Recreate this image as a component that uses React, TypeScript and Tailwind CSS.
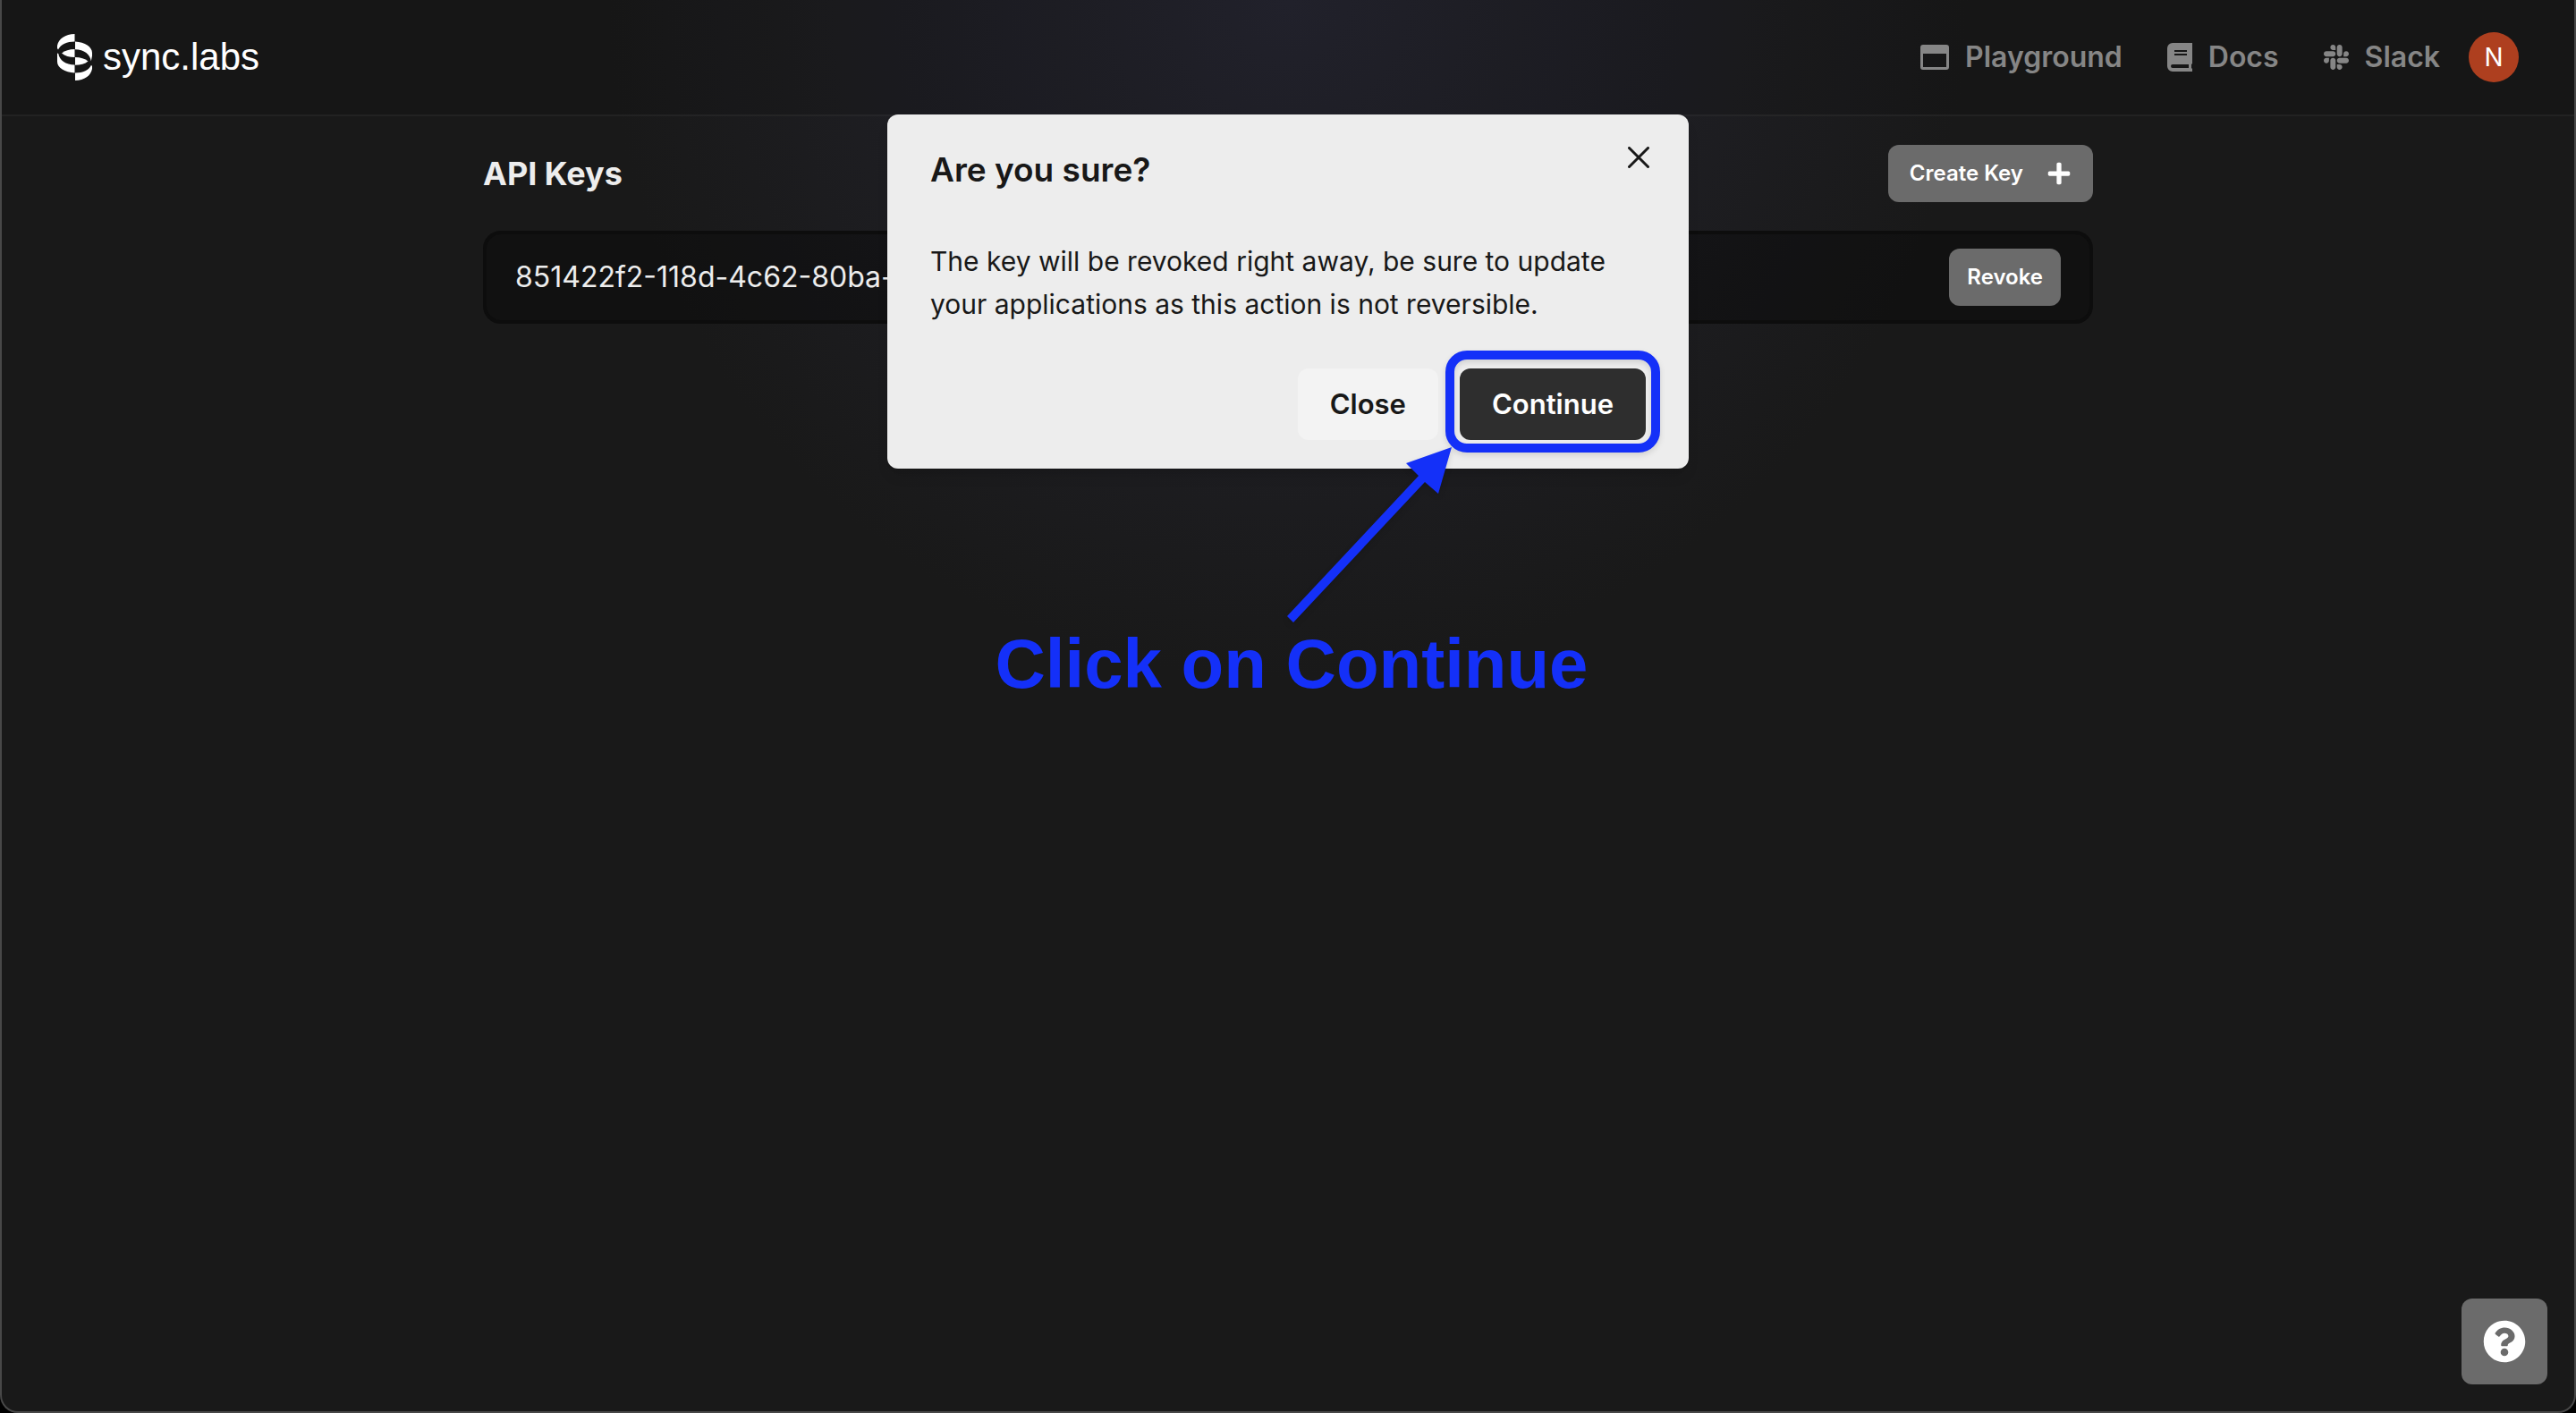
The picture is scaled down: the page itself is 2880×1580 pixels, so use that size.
import { FaPlus, FaQuestionCircle, FaSlack } from "react-icons/fa";

function Logo() {
  return (
    <a href="#" aria-label="sync.labs" className="flex items-center gap-3 text-white">
      <svg viewBox="0 0 39 52" className="h-[52px] w-[39px]" fill="currentColor" aria-hidden="true">
        <path d="M19.500 0V8.500C11 8.500 4 11.500 1 17.500L0 16V13C1.500 5.500 9 0 19.500 0Z" />
        <path d="M20 8.500C31 9 39 14.500 39 21V24.500L37.800 30.500C37 22.500 30 17.500 20 17.200Z" />
        <path d="M5 21.500C8.500 18.500 13.500 17 19.500 17V26C13.500 26 8.500 24.500 5 21.500Z" />
        <path d="M0 21.500L1.300 22C2.500 29.500 9.500 34.300 19.500 34.600V43.500C8.500 43 0 37.500 0 31Z" />
        <path d="M20 26C26 26 31 27.500 34.500 30.500C31 33.500 26 34.800 20 34.800Z" />
        <path d="M20 52V43.500C29 43.500 35.500 40.500 38 34.800L39 36V39C37.500 46.500 30.500 52 20 52Z" />
      </svg>
      <span className="font-['Liberation_Sans',sans-serif] text-[42px] leading-[52px]">sync.labs</span>
    </a>
  );
}

function WindowIcon() {
  return (
    <svg viewBox="0 0 32 28" className="h-7 w-8" fill="currentColor" aria-hidden="true">
      <path fillRule="evenodd" d="M3 0H29A3 3 0 0 1 32 3V25A3 3 0 0 1 29 28H3A3 3 0 0 1 0 25V3A3 3 0 0 1 3 0ZM3 10V25H29V10Z" />
    </svg>
  );
}

function BookIcon() {
  return (
    <svg viewBox="0 0 28 32" className="h-8 w-7" fill="currentColor" aria-hidden="true">
      <path
        fillRule="evenodd"
        d="M6 0H28V23L27 24V28L28 29V32H6A6 6 0 0 1 0 26V6A6 6 0 0 1 6 0ZM8 8V10H22V8ZM8 12V14H22V12ZM6 24A2 2 0 0 0 6 28H24V24Z"
      />
    </svg>
  );
}

function Header() {
  return (
    <header className="flex h-[130px] items-center justify-between border-b-2 border-white/5 bg-black/10 px-[62px]">
      <Logo />
      <div className="flex items-center gap-8">
        <nav className="flex items-center gap-[50px] text-[32px] leading-10 font-semibold text-[#868686]">
          <a href="#" className="flex items-center gap-[18px]"><WindowIcon />Playground</a>
          <a href="#" className="flex items-center gap-[18px]"><BookIcon />Docs</a>
          <a href="#" className="flex items-center gap-[18px]"><FaSlack className="h-8 w-7" />Slack</a>
        </nav>
        <button type="button" className="size-14 rounded-full bg-[#ae3f1f] text-[28px] leading-8 text-white">N</button>
      </div>
    </header>
  );
}

function ConfirmDialog() {
  return (
    <div className="absolute inset-x-0 top-32 mx-auto w-[896px]">
      <section role="dialog" aria-labelledby="confirm-title" className="relative rounded-xl bg-[#ededed] px-12 pt-10 pb-8 text-[#181818] shadow-lg">
        <h2 id="confirm-title" className="text-[37px] leading-[44px] font-semibold">Are you sure?</h2>
        <button type="button" aria-label="Dismiss" className="absolute top-9 right-11 size-6">
          <svg viewBox="0 0 24 24" className="size-6" fill="none" stroke="currentColor" strokeWidth="3" strokeLinecap="round" aria-hidden="true">
            <path d="M1.500 1.500L22.500 22.500M22.500 1.500L1.500 22.500" />
          </svg>
        </button>
        <p className="mt-14 text-[30px] leading-[48px]">
          The key will be revoked right away, be sure to update your applications as this action is not reversible.
        </p>
        <div className="mt-12 flex justify-end gap-6 text-[31px] leading-[48px] font-semibold">
          <button type="button" className="h-20 rounded-xl bg-[#f3f3f3] px-9">Close</button>
          <div className="relative">
            <button type="button" className="h-20 rounded-xl bg-[#2e2e2e] px-9 text-white">Continue</button>
            <div className="pointer-events-none absolute -inset-x-4 -top-5 -bottom-[14px] rounded-3xl border-[10px] border-[#1430f8] drop-shadow-md" />
          </div>
        </div>
      </section>
      <div className="pointer-events-none absolute top-full right-0 left-0 text-[#1430f8]">
        <svg viewBox="0 0 186 200" className="absolute -top-6 left-[445px] h-[200px] w-[186px] drop-shadow-md" fill="currentColor" aria-hidden="true">
          <path d="M186 0L171 52L156 39L9 196L2 189L149 32L135 18Z" />
        </svg>
        <p className="mt-[170px] ml-2 text-center font-['Liberation_Sans',sans-serif] text-[78px] leading-24 font-bold whitespace-nowrap">Click on Continue</p>
      </div>
    </div>
  );
}

export default function App() {
  return (
    <div className="min-h-screen bg-black font-['Inter',sans-serif]">
      <div className="relative min-h-screen overflow-hidden rounded-b-[20px] border-x-2 border-b-2 border-[#484848] bg-[#191919] bg-[radial-gradient(circle_760px_at_50%_0px,#252530_0%,#191919_100%)]">
        <Header />
        <main className="mx-auto mt-8 max-w-[1800px]">
          <div className="flex items-center justify-between">
            <h1 className="text-[36px] leading-10 font-bold text-[#ededed]">API Keys</h1>
            <button type="button" className="flex h-16 items-center gap-[26px] rounded-xl bg-[#6b6b6b] px-6 text-2xl font-semibold text-white">
              Create Key
              <FaPlus className="size-7" />
            </button>
          </div>
          <div className="mt-8 flex h-[104px] items-center justify-between rounded-[20px] border-4 border-[#0d0d0d] bg-black/30 px-8">
            <span className="text-[32px] leading-10 text-[#ededed]">851422f2-118d-4c62-80ba-</span>
            <button type="button" className="h-16 rounded-xl bg-[#6b6b6b] px-5 text-2xl font-semibold text-white">Revoke</button>
          </div>
        </main>
        <ConfirmDialog />
        <button type="button" aria-label="Help" className="absolute right-[30px] bottom-[30px] flex size-24 items-center justify-center rounded-xl bg-[#6b6b6b] text-white">
          <FaQuestionCircle className="size-12" />
        </button>
      </div>
    </div>
  );
}
